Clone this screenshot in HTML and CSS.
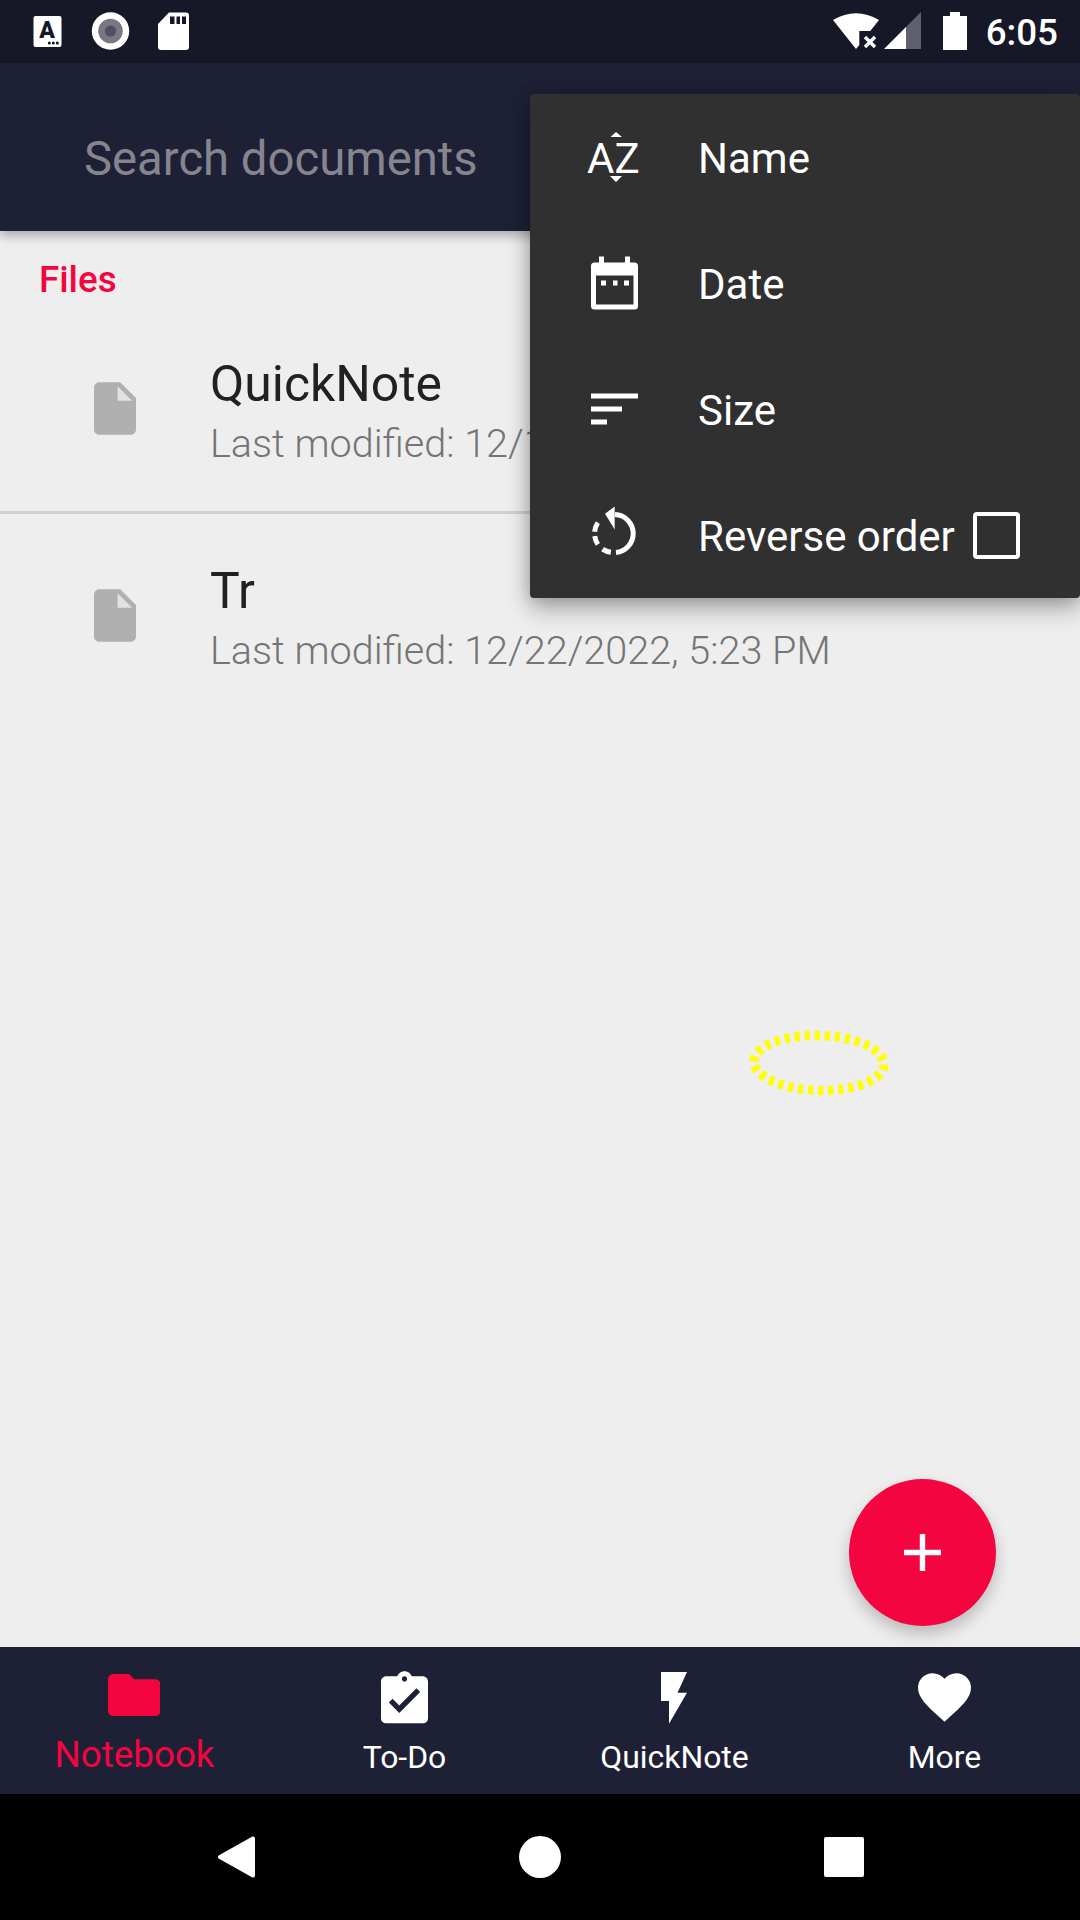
FILE: index.html
```html
<!DOCTYPE html>
<html>
<head>
    <meta charset="utf-8">
    <meta name="viewport" content="width=device-width, initial-scale=1">
    <title>Notebook</title>
    <link rel="stylesheet" href="styles.css">
</head>
<body>
<div class="screen">
    <div class="status-bar">
        <div class="status-left">
            <svg class="status-icon" viewBox="0 0 63 63">
                <rect x="17.5" y="16" width="28" height="31" rx="2" fill="#fff"/>
                <text x="31" y="37.5" text-anchor="middle" class="badge-letter">A</text>
                <circle cx="33.3" cy="43" r="1.5" fill="#161827"/>
                <circle cx="37.3" cy="43" r="1.5" fill="#161827"/>
                <circle cx="41.3" cy="43" r="1.5" fill="#161827"/>
            </svg>
            <svg class="status-icon" viewBox="0 0 63 63">
                <circle cx="31.5" cy="31" r="18.7" fill="#fff"/>
                <circle cx="31.5" cy="31" r="12.3" fill="#777884"/>
                <circle cx="31.5" cy="31" r="5.6" fill="#50515f"/>
            </svg>
            <svg class="status-icon" viewBox="0 0 63 63">
                <path d="M27 12.5H44a3 3 0 0 1 3 3V47a3 3 0 0 1-3 3H19a3 3 0 0 1-3-3V24Z" fill="#fff"/>
                <rect x="28" y="16.5" width="4.5" height="7.5" fill="#161827"/>
                <rect x="34.5" y="16.5" width="3.5" height="7.5" fill="#161827"/>
                <rect x="40" y="16.5" width="4" height="7.5" fill="#161827"/>
            </svg>
        </div>
        <div class="status-right">
            <svg class="wifi" viewBox="0 0 46 38">
                <path d="M0 8Q23-5.4 46 8L37.3 19H26.3V33L23 37Z" fill="#fff"/>
                <path d="M32 25 42 35M42 25 32 35" stroke="#fff" stroke-width="3.4"/>
            </svg>
            <svg class="signal" viewBox="0 0 37 37">
                <path d="M0 37 22 15V37Z" fill="#fff"/>
                <path d="M22 15 37 0V37H22Z" fill="#5e606c"/>
            </svg>
            <svg class="battery" viewBox="0 0 24 38">
                <path d="M7 0H17V4H24V38H0V4H7Z" fill="#fff"/>
            </svg>
            <span class="clock">6:05</span>
        </div>
    </div>

    <div class="app-bar">
        <span class="search-hint">Search documents</span>
    </div>

    <div class="content">
        <div class="section-title">Files</div>
        <div class="file-list">
            <div class="file-row">
                <svg class="file-icon" viewBox="4 2 16 20">
                    <path d="M6 2c-1.1 0-1.99.9-1.99 2L4 20c0 1.1.89 2 1.99 2H18c1.1 0 2-.9 2-2V8l-6-6H6z" fill="#b0b0b0"/>
                    <path d="M13 9V3.5L18.5 9H13z" fill="#e2e2e2"/>
                </svg>
                <div class="file-text">
                    <div class="file-name">QuickNote</div>
                    <div class="file-date">Last modified: 12/1</div>
                </div>
            </div>
            <div class="file-row">
                <svg class="file-icon" viewBox="4 2 16 20">
                    <path d="M6 2c-1.1 0-1.99.9-1.99 2L4 20c0 1.1.89 2 1.99 2H18c1.1 0 2-.9 2-2V8l-6-6H6z" fill="#b0b0b0"/>
                    <path d="M13 9V3.5L18.5 9H13z" fill="#e2e2e2"/>
                </svg>
                <div class="file-text">
                    <div class="file-name">Tr</div>
                    <div class="file-date">Last modified: 12/22/2022, 5:23 PM</div>
                </div>
            </div>
        </div>

        <svg class="touch-mark" viewBox="0 0 142 68">
            <ellipse cx="71" cy="34" rx="65" ry="27.5" transform="rotate(1.5 71 34)" pathLength="30" class="touch-ring"/>
        </svg>

        <div class="fab">
            <svg class="fab-plus" viewBox="0 0 37 37">
                <path d="M15.8 0H21.2V15.8H37V21.2H21.2V37H15.8V21.2H0V15.8H15.8Z" fill="#fff"/>
            </svg>
        </div>
    </div>

    <div class="tabs">
        <div class="tab tab-active">
            <div class="tab-icon">
                <svg class="icon-folder" viewBox="2 4 20 16">
                    <path d="M10 4H4c-1.1 0-2 .9-2 2v12c0 1.1.9 2 2 2h16c1.1 0 2-.9 2-2V8c0-1.1-.9-2-2-2h-8l-2-2z" fill="#f5053f"/>
                </svg>
            </div>
            <span class="tab-label">Notebook</span>
        </div>
        <div class="tab">
            <div class="tab-icon">
                <svg class="icon-todo" viewBox="3 1 18 20">
                    <path d="M19 3h-4.18C14.4 1.84 13.3 1 12 1c-1.3 0-2.4.84-2.82 2H5c-1.1 0-2 .9-2 2v14c0 1.1.9 2 2 2h14c1.1 0 2-.9 2-2V5c0-1.1-.9-2-2-2zm-7 0c.55 0 1 .45 1 1s-.45 1-1 1-1-.45-1-1 .45-1 1-1zm-2 14l-4-4 1.41-1.41L10 14.17l6.59-6.59L18 9l-8 8z" fill="#fff"/>
                </svg>
            </div>
            <span class="tab-label">To-Do</span>
        </div>
        <div class="tab">
            <div class="tab-icon">
                <svg class="icon-bolt" viewBox="0 0 26 52">
                    <path d="M0 0H26L16.5 20.7H26L8 51.7V29H0Z" fill="#fff"/>
                </svg>
            </div>
            <span class="tab-label">QuickNote</span>
        </div>
        <div class="tab">
            <div class="tab-icon">
                <svg class="icon-heart" viewBox="2 3 20 18.35">
                    <path d="M12 21.35l-1.45-1.32C5.4 15.36 2 12.28 2 8.5 2 5.42 4.42 3 7.5 3c1.74 0 3.41.81 4.5 2.09C13.09 3.81 14.76 3 16.5 3 19.58 3 22 5.42 22 8.5c0 3.78-3.4 6.86-8.55 11.54L12 21.35z" fill="#fff"/>
                </svg>
            </div>
            <span class="tab-label">More</span>
        </div>
    </div>

    <div class="nav-bar">
        <svg class="nav-back" viewBox="0 0 38 42">
            <path d="M3 21 36 2.5V39.5Z" fill="#fff" stroke="#fff" stroke-width="4" stroke-linejoin="round"/>
        </svg>
        <div class="nav-home"></div>
        <div class="nav-recent"></div>
    </div>

    <div class="sort-menu">
        <div class="sort-item">
            <svg class="sort-icon" viewBox="0 0 63 63">
                <text x="4" y="46.5" class="sort-letters">AZ</text>
                <path d="M27.5 11 33 6 39 11ZM27 50H39L33 56Z" fill="#fff"/>
            </svg>
            <span class="sort-label">Name</span>
        </div>
        <div class="sort-item">
            <svg class="sort-icon" viewBox="0 0 63 63">
                <path fill-rule="evenodd" d="M16 4.5H21V10.5H42V4.5H47V10.5H51.5A3.5 3.5 0 0 1 55 14V54A3.5 3.5 0 0 1 51.5 57.5H11.5A3.5 3.5 0 0 1 8 54V14A3.5 3.5 0 0 1 11.5 10.5H16ZM13 23.5V52.5H50.5V23.5Z" fill="#fff"/>
                <path d="M18 28.5H23V33.5H18ZM30 28.5H34.5V33.5H30ZM41 28.5H46V33.5H41Z" fill="#fff"/>
            </svg>
            <span class="sort-label">Date</span>
        </div>
        <div class="sort-item">
            <svg class="sort-icon" viewBox="0 0 63 63">
                <path d="M8 15.5H55V20.5H8ZM8 28.5H39V33.5H8ZM8 41.5H24V46.5H8Z" fill="#fff"/>
            </svg>
            <span class="sort-label">Size</span>
        </div>
        <div class="sort-item">
            <svg class="sort-icon" viewBox="0 0 63 63">
                <g transform="translate(-1 0)">
                    <path d="M32.7 2.5 23 9.8 32.7 25.5Z" fill="#fff"/>
                    <path d="M33 10.5A19 19 0 0 1 34 48.4M28.9 48.3A19 19 0 0 1 20.6 45.1M15.9 40.4A19 19 0 0 1 12.7 32.1M12.6 27.8A19 19 0 0 1 15.9 18.6" fill="none" stroke="#fff" stroke-width="5"/>
                </g>
            </svg>
            <span class="sort-label">Reverse order</span>
            <span class="sort-check"></span>
        </div>
    </div>
</div>
</body>
</html>
```

FILE: styles.css
```css
html, body {margin:0; padding:0; background:#000;}
body {font-family:Roboto, "Liberation Sans", sans-serif;}
svg {display:block;}

.screen {position:relative; width:1080px; height:1920px; display:flex; flex-direction:column; overflow:hidden; background:#eeeeee;}

/* status bar */
.status-bar {height:63px; background:#161827; display:flex; justify-content:space-between; flex:none;}
.status-left {display:flex; padding-left:16px;}
.status-icon {width:63px; height:63px;}
.badge-letter {font-family:Roboto, sans-serif; font-size:23px; font-weight:900; fill:#161827;}
.status-right {display:flex; align-items:flex-start; padding:12px 22px 0 0; color:#fff;}
.wifi {width:46px; height:38px;}
.signal {width:37px; height:37px; margin-left:5px;}
.battery {width:24px; height:38px; margin-left:22px;}
.clock {font-size:36.75px; font-weight:500; line-height:40px; margin-left:19px; margin-top:1px;}

/* app bar */
.app-bar {height:168px; flex:none; background:#1e2036; display:flex; align-items:center; padding:24px 0 0 84px; box-sizing:border-box; position:relative; z-index:1; box-shadow:0 5px 10px rgba(0,0,0,.28);}
.search-hint {font-size:47.25px; color:#85858f;}

/* list */
.content {flex:1; position:relative;}
.section-title {font-size:36.75px; font-weight:500; line-height:40px; color:#f5053f; padding:28.5px 0 7px 39px;}
.file-row {height:204px; display:flex; align-items:center; padding-left:94px; border-bottom:3px solid #d0d0d0;}
.file-row:last-child {border-bottom:none;}
.file-icon {width:42px; height:53px; flex:none;}
.file-text {margin-left:74px; margin-top:11px;}
.file-name {font-size:49.875px; line-height:60px; color:#212121;}
.file-date {font-size:39.55px; font-weight:300; line-height:60px; color:#757575; white-space:nowrap;}

.touch-mark {position:absolute; left:748px; top:798px; width:142px; height:68px;}
.touch-ring {fill:none; stroke:#ffff00; stroke-width:9.5; stroke-dasharray:.52 .48;}

.fab {position:absolute; right:84px; bottom:21px; width:147px; height:147px; border-radius:50%; background:#f5053f; display:flex; align-items:center; justify-content:center; box-shadow:0 8px 16px rgba(0,0,0,.22);}
.fab-plus {width:37px; height:37px;}

/* bottom tabs */
.tabs {height:147px; flex:none; background:#1e2036; display:grid; grid-template-columns:repeat(4, 270px); color:#fff; position:relative;}
.tab {display:flex; flex-direction:column; align-items:center; padding-top:23.5px;}
.tab-icon {height:54px; display:flex; align-items:center; justify-content:center; padding-right:2px;}
.tab-label {font-size:31.9px; line-height:40px; margin-top:12.5px; padding-right:1px;}
.tab-active {color:#f5053f;}
.tab-active .tab-label {font-size:36.8px; line-height:36.4px;}
.icon-folder {width:52.5px; height:42px; margin-bottom:6px;}
.icon-todo {width:47px; height:52.5px;}
.icon-bolt {width:26px; height:52px;}
.icon-heart {width:53px; height:49px;}

/* system nav */
.nav-bar {height:126px; flex:none; background:#000; display:grid; grid-template-columns:repeat(3, 304px); justify-content:center; justify-items:center; align-items:center;}
.nav-back {width:38px; height:42px;}
.nav-home {width:42px; height:42px; border-radius:50%; background:#fff;}
.nav-recent {width:40px; height:40px; border-radius:2px; background:#fff;}

/* sort popup */
.sort-menu {position:absolute; left:530px; top:94px; width:550px; background:#303030; border-radius:4px; color:#fff; z-index:2; box-shadow:0 10px 24px rgba(0,0,0,.32), 0 0 16px rgba(0,0,0,.15);}
.sort-item {height:126px; display:flex; align-items:center; padding-left:53px;}
.sort-icon {width:63px; height:63px; flex:none;}
.sort-letters {font-family:Roboto, sans-serif; font-size:42px; fill:#fff;}
.sort-label {font-size:42px; margin-left:52px; padding-top:2px;}
.sort-check {width:47px; height:47px; box-sizing:border-box; border:4.5px solid #fff; border-radius:4px; margin-left:18px;}
```
